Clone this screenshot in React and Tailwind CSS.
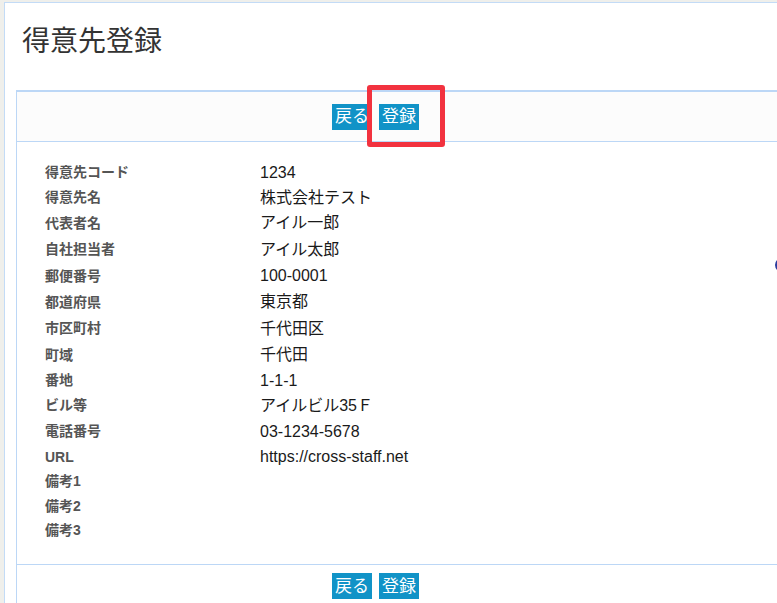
import React from 'react'

const rows = [
  ['得意先コード', '1234', 25],
  ['得意先名', '株式会社テスト', 25],
  ['代表者名', 'アイル一郎', 26],
  ['自社担当者', 'アイル太郎', 27],
  ['郵便番号', '100-0001', 26],
  ['都道府県', '東京都', 26],
  ['市区町村', '千代田区', 27],
  ['町域', '千代田', 26],
  ['番地', '1-1-1', 25],
  ['ビル等', 'アイルビル35Ｆ', 25],
  ['電話番号', '03-1234-5678', 27],
  ['URL', 'https://cross-staff.net', 24],
  ['備考1', '', 25],
  ['備考2', '', 24],
  ['備考3', '', 25],
]

function Btn({ children }) {
  return (
    <button className="h-[26px] w-[40px] bg-[#1193c7] text-white text-[17px] leading-none flex items-center justify-center">
      {children}
    </button>
  )
}

function Buttons() {
  return (
    <div className="w-[717px] flex justify-center gap-[7px]">
      <Btn>戻る</Btn>
      <Btn>登録</Btn>
    </div>
  )
}

export default function App() {
  return (
    <div className="min-h-screen bg-[#efefeb] pl-[4px] pt-[2px] overflow-hidden relative" style={{ fontFamily: '"Liberation Sans", "Noto Sans CJK JP", sans-serif' }}>
      <div className="bg-white border-l border-t border-[#c3dbf6] pl-[11px] min-h-[601px]">
        <h1 className="ml-[6px] pt-[16px] h-[56px] text-[28px] leading-[40px] text-[#333]" style={{ fontFamily: '"Noto Sans CJK JP", sans-serif' }}>
          得意先登録
        </h1>
        <div className="mt-[31px] border-l border-t-2 border-[#bcd7f6]">
          <div className="relative h-[50px] bg-[#fcfcfc] border-b border-[#bcd7f6] flex items-center">
            <Buttons />
            <div className="absolute left-[350px] top-[-7px] w-[78px] h-[62px] border-[5px] border-[#f2323f] rounded-[3px]" />
          </div>
          <div className="pt-[18px] pb-[21px] pl-[28px]">
            {rows.map(([label, value, h]) => (
              <div key={label} className="flex items-center" style={{ height: h }}>
                <div className="w-[215px] text-[14px] font-bold text-[#555]">{label}</div>
                <div className="text-[16px] text-[#1a1a1a]">{value}</div>
              </div>
            ))}
          </div>
          <div className="border-t border-[#bcd7f6] pt-[8px] h-[40px] flex items-start">
            <Buttons />
          </div>
        </div>
      </div>
      <div className="absolute left-[775px] top-[258px] w-[14px] h-[14px] rounded-full border-2 border-[#2a3c9e]" />
    </div>
  )
}
